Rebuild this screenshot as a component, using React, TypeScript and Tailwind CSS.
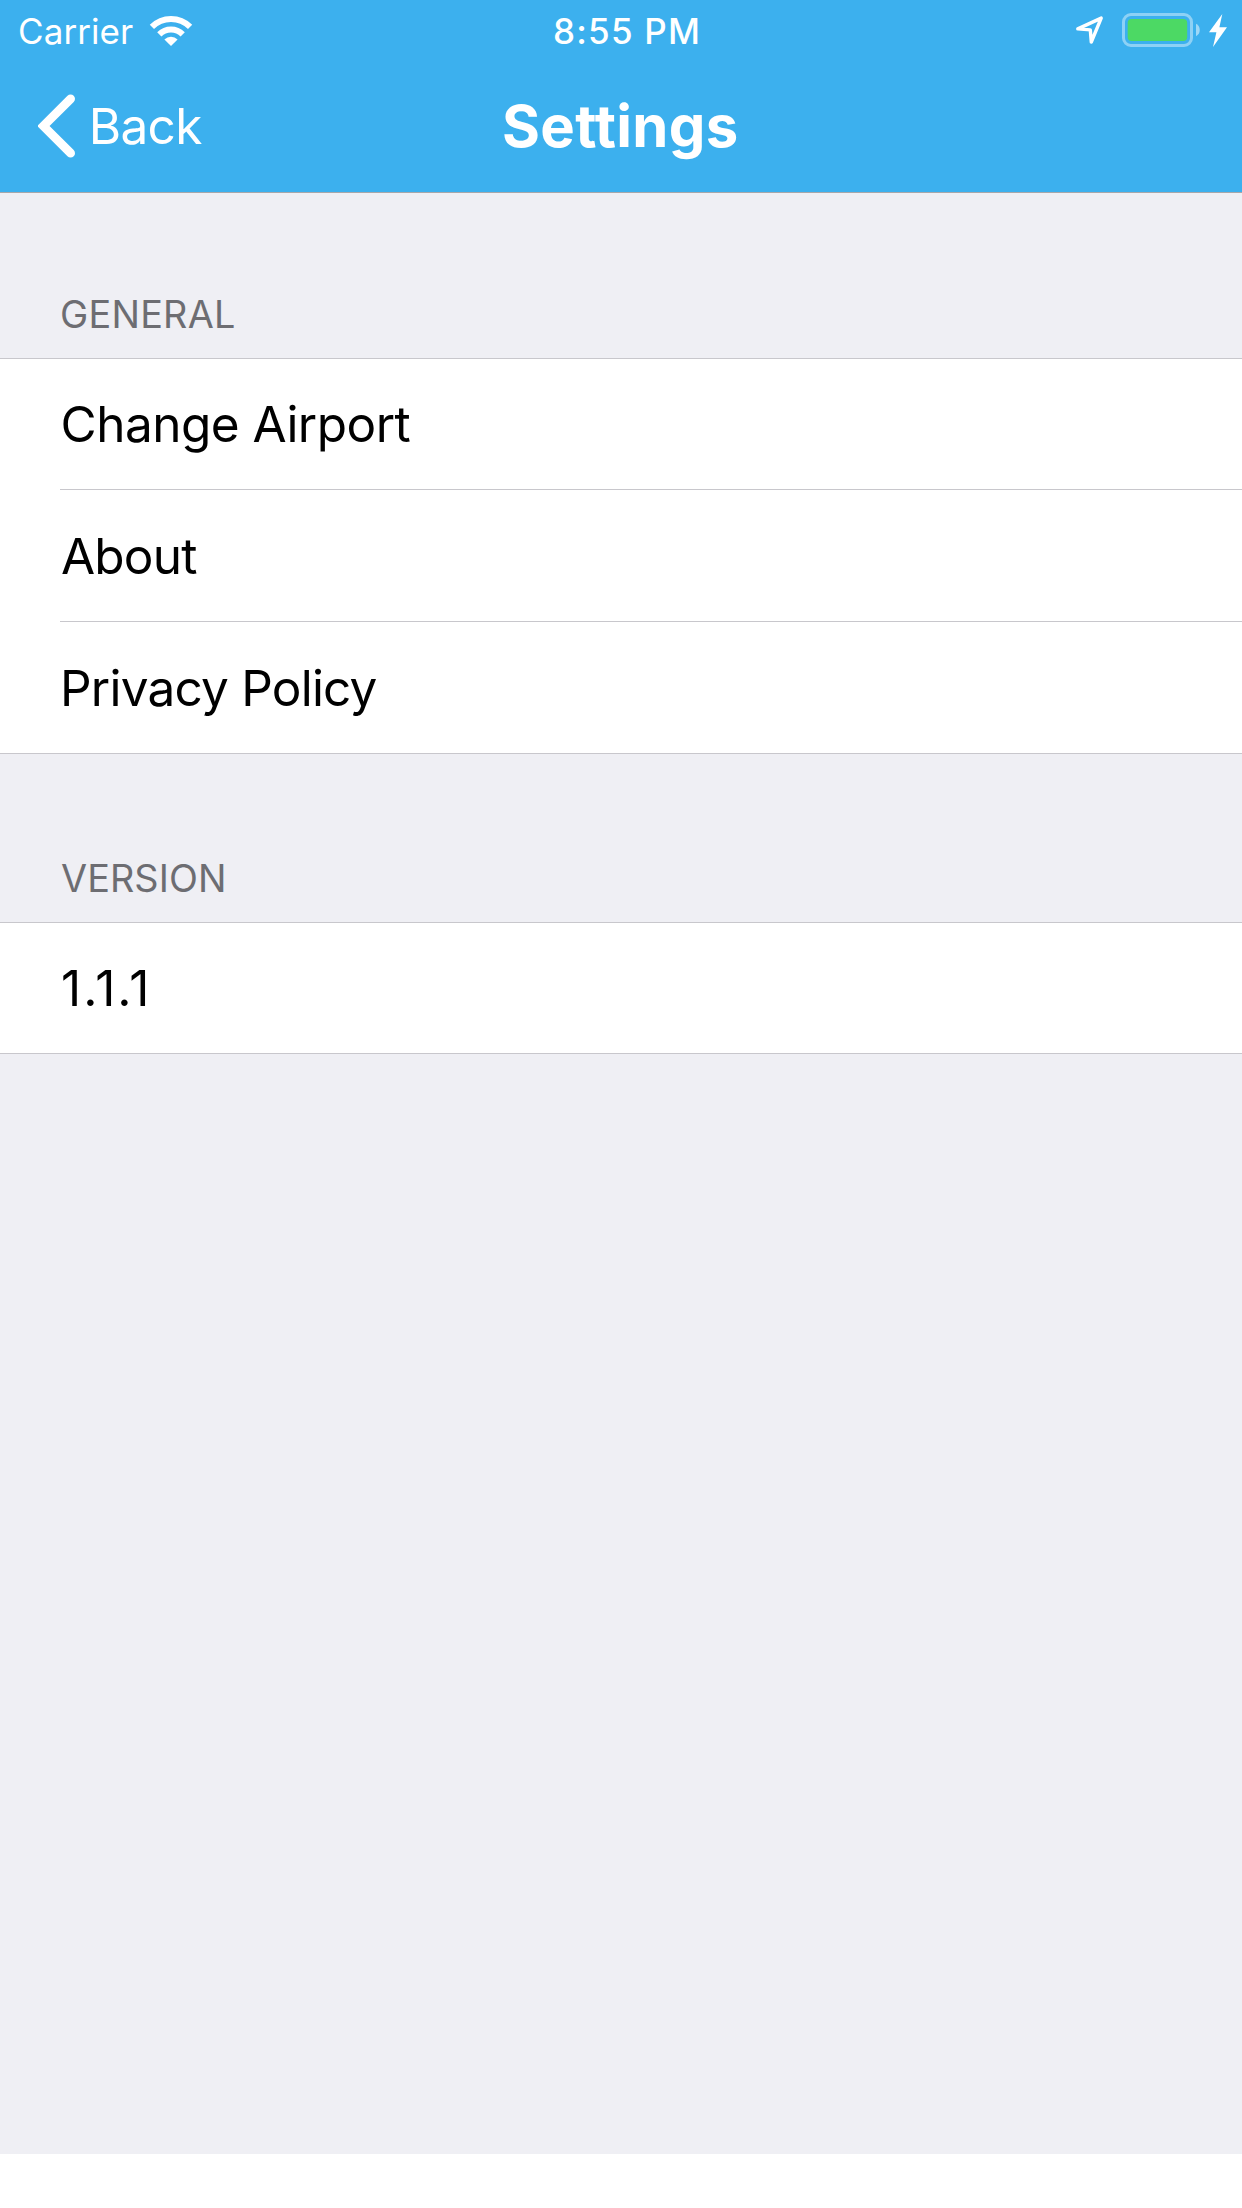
import type { ReactNode } from "react";

function WifiIcon() {
  return (
    <svg className="h-[31px] w-[44px]" viewBox="0 0 44 31" fill="none">
      <path d="M2.9 11.9A27 27 0 0 1 41.1 11.9" stroke="#fff" strokeWidth="6" />
      <path d="M10.3 19.3A16.6 16.6 0 0 1 33.7 19.3" stroke="#fff" strokeWidth="6" />
      <path d="M22 31L15.4 24.4A9.3 9.3 0 0 1 28.6 24.4Z" fill="#fff" />
    </svg>
  );
}

function LocationIcon() {
  return (
    <svg className="h-[28px] w-[28px]" viewBox="0 0 28 28" fill="none">
      <path
        d="M1.8 12.9L25.2 2.1L15.3 26L14.3 13.9Z"
        stroke="#fff"
        strokeWidth="3.4"
        strokeLinejoin="round"
      />
    </svg>
  );
}

function BatteryIcon() {
  return (
    <svg className="h-[34px] w-[78px]" viewBox="0 0 78 34" fill="none">
      <rect x="1.5" y="1.5" width="68" height="31" rx="7.5" stroke="#fff" strokeOpacity="0.42" strokeWidth="3" />
      <rect x="5.7" y="6" width="59.5" height="22" rx="4" fill="#4cd964" />
      <path d="M74 10.8C79 13 79 21 74 23.2Z" fill="#fff" fillOpacity="0.5" />
    </svg>
  );
}

function BoltIcon() {
  return (
    <svg className="h-[33px] w-[18px]" viewBox="0 0 18 33" fill="#fff">
      <path d="M13.3 0L0 18.2H7.4L4 33L18 13.2H10.4Z" />
    </svg>
  );
}

function BackChevron() {
  return (
    <svg className="h-[64px] w-[38px]" viewBox="0 0 38 64" fill="none">
      <path
        d="M32.6 4.8L5.4 32L32.6 59.2"
        stroke="#fff"
        strokeWidth="8.8"
        strokeLinecap="round"
        strokeLinejoin="miter"
      />
    </svg>
  );
}

function StatusBar() {
  return (
    <div className="grid h-[62px] grid-cols-3 items-center text-[35px] leading-none">
      <div className="flex items-center gap-[16px] pl-[18px]">
        <span className="tracking-[0.08px]">Carrier</span>
        <span className="-mt-[2px]"><WifiIcon /></span>
      </div>
      <div className="pl-[139px] font-medium tracking-[1.22px] whitespace-nowrap">8:55 PM</div>
      <div className="-mt-[2px] flex items-center justify-end pr-[15px]">
        <LocationIcon />
        <span className="ml-[18px]"><BatteryIcon /></span>
        <span className="ml-[9px]"><BoltIcon /></span>
      </div>
    </div>
  );
}

function NavBar() {
  return (
    <nav className="grid h-[130px] grid-cols-3 items-center pb-[2px]">
      <div className="flex items-center pl-[38px]">
        <BackChevron />
        <span className="ml-[12.8px] pt-[2px] text-[49.5px] leading-none tracking-[-0.7px]">Back</span>
      </div>
      <h1 className="pl-[88px] text-[58px] leading-none font-bold tracking-[0.32px]">Settings</h1>
    </nav>
  );
}

function SectionTitle({ children, first = false }: { children: ReactNode; first?: boolean }) {
  return (
    <h2
      className={`flex items-end pb-[21px] text-[37.8px] leading-[46px] text-[#6d6d72] ${
        first ? "h-[165px] pl-[60px] tracking-[0.25px]" : "h-[168px] pl-[61px] tracking-[0.08px]"
      }`}
    >
      {children}
    </h2>
  );
}

function Row({ label, className }: { label: string; className: string }) {
  return <li className={`flex items-center pt-[2px] text-[49.5px] leading-none ${className}`}>{label}</li>;
}

export default function App() {
  return (
    <div className="flex h-[2208px] w-[1242px] flex-col bg-white font-[Inter,sans-serif] text-black">
      <header className="h-[193px] shrink-0 border-b border-[#a7a7aa] bg-[#3cb0ee] text-white">
        <StatusBar />
        <NavBar />
      </header>
      <main className="h-[1961px] shrink-0 bg-[#efeff4]">
        <SectionTitle first>GENERAL</SectionTitle>
        <ul className="border-y border-[#c8c7cc] bg-white pl-[60px]">
          <Row label="Change Airport" className="h-[131px] border-b border-[#c8c7cc] pl-[0.6px] tracking-[-0.53px]" />
          <Row label="About" className="h-[132px] border-b border-[#c8c7cc] pl-px tracking-[-0.8px]" />
          <Row label="Privacy Policy" className="h-[131px] tracking-[-0.78px]" />
        </ul>
        <SectionTitle>VERSION</SectionTitle>
        <ul className="border-y border-[#c8c7cc] bg-white pl-[60px]">
          <Row label="1.1.1" className="h-[130px] pl-px tracking-[2.02px]" />
        </ul>
      </main>
    </div>
  );
}
